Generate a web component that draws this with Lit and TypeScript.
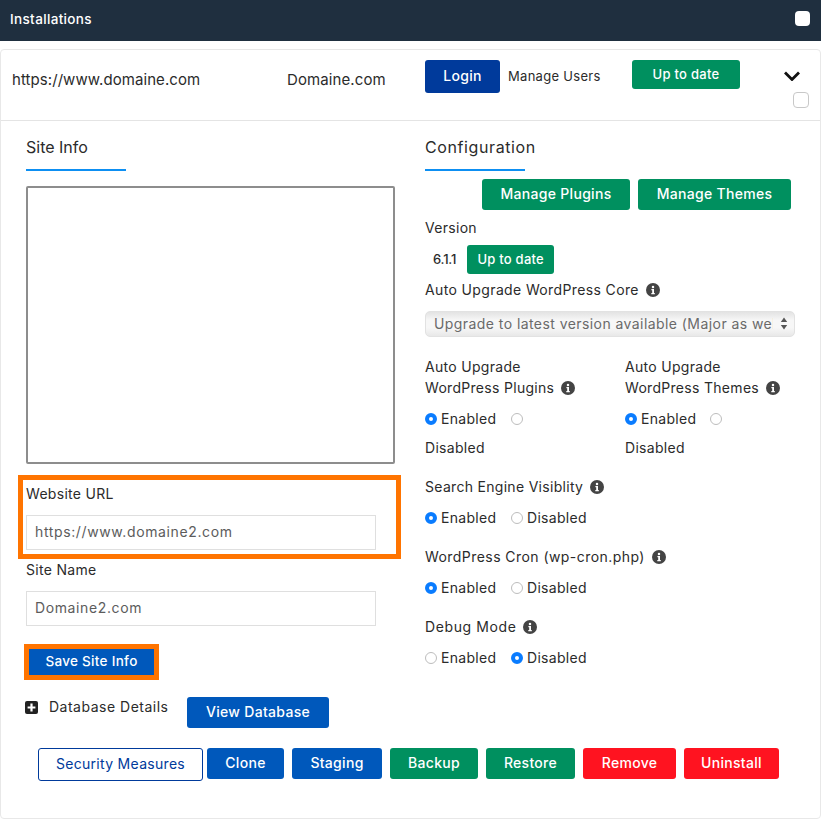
import { LitElement, html, css, svg } from "lit";
import { customElement } from "lit/decorators.js";

const info = html`<svg class="info" viewBox="0 0 14 14"><circle cx="7" cy="7" r="7" fill="#444"/><circle cx="7" cy="3.9" r="1.25" fill="#fff"/><path d="M5.4 6h2.6v4.1h.8v1.2H5.3v-1.2h.9V7.2h-.8z" fill="#fff"/></svg>`;
const plus = html`<svg class="plus" viewBox="0 0 13 13"><rect width="13" height="13" rx="2" fill="#222"/><path d="M5.4 2.6h2.2v2.8h2.8v2.2H7.6v2.8H5.4V7.6H2.6V5.4h2.8z" fill="#fff"/></svg>`;
const arrows = svg`<path d="M4 0.5 7.2 5H.8z" fill="#555"/><path d="M4 12.5.8 8h6.4z" fill="#555"/>`;

const radio = (label: string, on: boolean) => html`<span class="opt"><span class="radio ${on ? "on" : ""}"></span><span>${label}</span></span>`;

@customElement("app-root")
export class AppRoot extends LitElement {
  static styles = css`
    :host { display: block; font-family: Inter, "Open Sans", sans-serif; font-size: 14px; line-height: 21px; letter-spacing: .3px; color: #2b2b2b; background: #fff; height: 819px; overflow: hidden; }
    * { box-sizing: border-box; }
    .top { height: 41px; background: #1f2f3f; color: #fff; display: flex; justify-content: space-between; align-items: flex-start; padding: 9px 11px 0 10px; font-weight: 500; font-size: 13.5px; letter-spacing: .35px; }
    .top i { width: 15px; height: 15px; margin-top: 2px; background: #fff; border-radius: 4px; }
    .card { margin-top: 8px; height: 770px; border: 1px solid #e8e8e8; border-radius: 4px; }
    .head { height: 71px; border-bottom: 1px solid #e4e4e4; display: flex; align-items: flex-start; padding: 10px 11px 0 11px; }
    .url { width: 275px; margin-top: 9px; font-size: 15px; letter-spacing: .07px; }
    .dom { width: 138px; margin-top: 9px; font-size: 15px; letter-spacing: .1px; }
    .btn { display: flex; align-items: center; justify-content: center; height: 31px; padding-bottom: 2px; color: #fff; border-radius: 3px; font-weight: 500; font-size: 14px; white-space: nowrap; }
    .blue { background: #0058bb; }
    .green { background: #00905f; }
    .red { background: #ff1320; }
    .login { width: 75px; height: 33px; background: #003a9b; }
    .users { width: 124px; margin: 6px 0 0 8px; font-size: 13px; }
    .uptop { width: 108px; height: 29px; padding-bottom: 1px; font-size: 13px; }
    .side { margin-left: auto; display: flex; flex-direction: column; align-items: flex-end; }
    .chev { width: 16px; height: 10px; margin: 11px 9px 0 0; display: block; }
    .box { width: 16px; height: 16px; margin-top: 11px; border: 1px solid #c8c8c8; border-radius: 4px; }
    .cols { display: grid; grid-template-columns: 383px 370px; column-gap: 24px; padding: 14px 0 0 17px; }
    .title { margin: 0; width: 100px; height: 36px; padding-bottom: 10px; border-bottom: 2px solid #0d8ff2; font-size: 16px; font-weight: 400; line-height: 24px; white-space: nowrap; }
    .left .title { margin-left: 8px; letter-spacing: 0; }
    .right .title { letter-spacing: .6px; }
    .preview { display: block; width: 369px; height: 278px; margin: 15px 0 0 8px; border: 2px solid #8d8d8d; border-radius: 2px; }
    .flag { border: 5px solid #ff7400; }
    .urlbox { margin-top: 11px; height: 84px; padding: 3px 0 0 3px; }
    .name { margin: 0 0 0 8px; }
    .field { display: flex; align-items: center; width: 350px; height: 35px; margin-top: 11px; padding: 0 0 3px 8px; border: 1px solid #dfdfdf; color: #5c5c5c; letter-spacing: .62px; }
    .namef { margin-left: 8px; }
    .save { margin: 18px 0 0 6px; width: 135px; height: 36px; }
    .save .btn { height: 26px; border-radius: 0; font-size: 13.5px; padding-bottom: 1px; }
    .db { display: flex; align-items: flex-start; margin: 17px 0 0 7px; }
    .plus { width: 13px; height: 13px; margin-top: 4px; flex: none; }
    .txt { width: 138px; margin-left: 11px; letter-spacing: .5px; line-height: 20px; }
    .vdb { width: 142px; }
    .manage { display: flex; justify-content: flex-end; gap: 8px; margin: 8px 4px 0 0; }
    .mp { width: 148px; }
    .mt { width: 153px; }
    .lab { display: flex; align-items: center; gap: 7px; white-space: nowrap; }
    .info { width: 14px; height: 14px; flex: none; display: block; }
    .lab.v { margin-top: 7px; }
    .ver { display: flex; align-items: center; gap: 11px; margin-top: 7px; padding-left: 8px; font-weight: 500; font-size: 13px; letter-spacing: -.2px; }
    .ver .btn { width: 87px; height: 29px; padding-bottom: 0; font-size: 13px; letter-spacing: .25px; }
    .core { margin-top: 5px; letter-spacing: .37px; }
    .cron { letter-spacing: .44px; }
    .debug { letter-spacing: .6px; }
    .select { display: flex; align-items: center; justify-content: space-between; width: 370px; height: 26px; margin-top: 11px; padding: 0 6px 2px 8px; border: 1px solid #e2e2e2; border-radius: 5px; color: #6a6a6a; background: linear-gradient(#e3e3e3, #f7f7f7 35%, #f7f7f7 65%, #e8e8e8); white-space: nowrap; letter-spacing: .43px; }
    .select span { overflow: hidden; width: 339px; }
    .select svg { width: 8px; height: 13px; flex: none; }
    .pair { display: grid; grid-template-columns: 200px 170px; margin-top: 19px; }
    .rad { display: flex; margin-top: 10px; }
    .opt { display: flex; align-items: center; gap: 4px; width: 86px; }
    .radio { width: 12px; height: 12px; border: 1px solid #bdbdbd; border-radius: 50%; flex: none; background: #fff; }
    .radio.on { border: 4px solid #0a7cff; }
    .dis { margin-top: 8px; }
    .s { margin-top: 18px; }
    .actions { display: flex; gap: 8px; margin: 20px 0 0 37px; }
    .sec { width: 165px; height: 33px; margin-right: -4px; border: 1px solid #003a9b; color: #003a9b; background: #fff; font-weight: 400; }
    .w77 { width: 77px; } .w90 { width: 90px; } .w88 { width: 88px; } .w89 { width: 89px; } .w93 { width: 93px; } .w95 { width: 95px; }
  `;

  render() {
    return html`
      <div class="top"><span>Installations</span><i></i></div>
      <div class="card">
        <div class="head">
          <span class="url">https://www.domaine.com</span>
          <span class="dom">Domaine.com</span>
          <span class="btn login">Login</span>
          <span class="users">Manage Users</span>
          <span class="btn green uptop">Up to date</span>
          <div class="side">
            <svg class="chev" viewBox="0 0 16 10"><path d="M1 1.5 8 8.5l7-7" fill="none" stroke="#111" stroke-width="2.8"/></svg>
            <span class="box"></span>
          </div>
        </div>
        <div class="cols">
          <div class="left">
            <h2 class="title">Site Info</h2>
            <div class="preview"></div>
            <div class="flag urlbox">
              <label>Website URL</label>
              <div class="field">https://www.domaine2.com</div>
            </div>
            <div class="name">Site Name</div>
            <div class="field namef">Domaine2.com</div>
            <div class="flag save"><span class="btn blue">Save Site Info</span></div>
            <div class="db">${plus}<span class="txt">Database Details</span><span class="btn blue vdb">View Database</span></div>
          </div>
          <div class="right">
            <h2 class="title">Configuration</h2>
            <div class="manage"><span class="btn green mp">Manage Plugins</span><span class="btn green mt">Manage Themes</span></div>
            <div class="lab v">Version</div>
            <div class="ver"><span>6.1.1</span><span class="btn green">Up to date</span></div>
            <div class="lab core">Auto Upgrade WordPress Core ${info}</div>
            <div class="select"><span>Upgrade to latest version available (Major as well as Minor)</span><svg viewBox="0 0 8 13">${arrows}</svg></div>
            <div class="pair">
              <div>
                <div>Auto Upgrade</div>
                <div class="lab">WordPress Plugins ${info}</div>
                <div class="rad">${radio("Enabled", true)}${radio("", false)}</div>
                <div class="dis">Disabled</div>
              </div>
              <div>
                <div>Auto Upgrade</div>
                <div class="lab">WordPress Themes ${info}</div>
                <div class="rad">${radio("Enabled", true)}${radio("", false)}</div>
                <div class="dis">Disabled</div>
              </div>
            </div>
            <div class="lab s">Search Engine Visiblity ${info}</div>
            <div class="rad">${radio("Enabled", true)}${radio("Disabled", false)}</div>
            <div class="lab s cron">WordPress Cron (wp-cron.php) ${info}</div>
            <div class="rad">${radio("Enabled", true)}${radio("Disabled", false)}</div>
            <div class="lab s debug">Debug Mode ${info}</div>
            <div class="rad">${radio("Enabled", false)}${radio("Disabled", true)}</div>
          </div>
        </div>
        <div class="actions">
          <span class="btn sec">Security Measures</span>
          <span class="btn blue w77">Clone</span>
          <span class="btn blue w90">Staging</span>
          <span class="btn green w88">Backup</span>
          <span class="btn green w89">Restore</span>
          <span class="btn red w93">Remove</span>
          <span class="btn red w95">Uninstall</span>
        </div>
      </div>
    `;
  }
}
